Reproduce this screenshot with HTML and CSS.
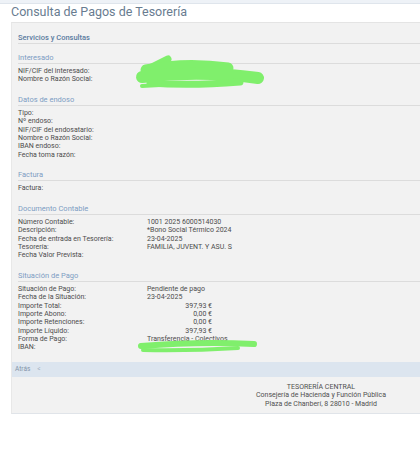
FILE: index.html
```html
<!DOCTYPE html>
<html lang="es">
<head>
    <meta charset="UTF-8">
    <meta name="viewport" content="width=device-width, initial-scale=1.0">
    <title>Consulta de Pagos de Tesorería</title>
    <link rel="stylesheet" href="styles.css">
</head>
<body>
    <div class="topbar"></div>
    <h1 class="title">Consulta de Pagos de Tesorería</h1>

    <div class="panel">
        <div class="panel-body">
            <h2 class="panel-head">Servicios y Consultas</h2>

            <div class="section">
                <h3>Interesado</h3>
                <div class="rows">
                    <span>NIF/CIF del interesado:</span><span></span>
                    <span>Nombre o Razón Social:</span><span></span>
                </div>
            </div>

            <div class="section">
                <h3>Datos de endoso</h3>
                <div class="rows">
                    <span>Tipo:</span><span></span>
                    <span>Nº endoso:</span><span></span>
                    <span>NIF/CIF del endosatario:</span><span></span>
                    <span>Nombre o Razón Social:</span><span></span>
                    <span>IBAN endoso:</span><span></span>
                    <span>Fecha toma razón:</span><span></span>
                </div>
            </div>

            <div class="section">
                <h3>Factura</h3>
                <div class="rows">
                    <span>Factura:</span><span></span>
                </div>
            </div>

            <div class="section">
                <h3>Documento Contable</h3>
                <div class="rows">
                    <span>Número Contable:</span><span>1001 2025 6000514030</span>
                    <span>Descripción:</span><span>*Bono Social Térmico 2024</span>
                    <span>Fecha de entrada en Tesorería:</span><span>23-04-2025</span>
                    <span>Tesorería:</span><span>FAMILIA, JUVENT. Y ASU. S</span>
                    <span>Fecha Valor Prevista:</span><span></span>
                </div>
            </div>

            <div class="section last">
                <h3>Situación de Pago</h3>
                <div class="rows">
                    <span>Situación de Pago:</span><span>Pendiente de pago</span>
                    <span>Fecha de la Situación:</span><span>23-04-2025</span>
                    <span>Importe Total:</span><span class="amount">397,93 €</span>
                    <span>Importe Abono:</span><span class="amount">0,00 €</span>
                    <span>Importe Retenciones:</span><span class="amount">0,00 €</span>
                    <span>Importe Líquido:</span><span class="amount">397,93 €</span>
                    <span>Forma de Pago:</span><span>Transferencia - Colectivos</span>
                    <span>IBAN:</span><span></span>
                </div>
            </div>
        </div>

        <div class="backbar">
            <a href="#">Atrás</a>
            <span class="arrow">&lt;</span>
        </div>

        <div class="footer">
            <p>TESORERÍA CENTRAL</p>
            <p>Consejería de Hacienda y Función Pública</p>
            <p>Plaza de Chanberí, 8 28010 - Madrid</p>
        </div>
    </div>

    <!-- redaction marks over the personal data -->
    <svg class="marks" width="420" height="474" viewBox="0 0 420 474">
        <g fill="none" stroke="#80ef6c" stroke-linecap="round" stroke-linejoin="round">
            <path d="M150 68 L168 59" stroke-width="7"/>
            <path d="M146 70 Q185 62 228 68" stroke-width="11"/>
            <path d="M142 77 Q200 70 258 78" stroke-width="12"/>
            <path d="M150 83 Q190 86 240 82" stroke-width="7"/>
            <path d="M142 86 L160 85" stroke-width="4"/>
            <path d="M141 346 Q200 341 254 344" stroke-width="6"/>
            <path d="M143 350 Q190 351 238 348" stroke-width="4"/>
        </g>
    </svg>
</body>
</html>
```

FILE: styles.css
```css
html, body {
    margin: 0;
    overflow: hidden;
}

body {
    position: relative;
    font-family: Roboto, "Liberation Sans", Arial, sans-serif;
    color: #4c4c4c;
    background-color: #fff;
}

.topbar {
    height: 3px;
    background-color: #eef2f7;
    border-bottom: 1px solid #dfe5ec;
}

.title {
    margin: 0 0 2px 11px;
    font-size: 12.5px;
    font-weight: normal;
    line-height: 16px;
    color: #687c90;
}

.panel {
    margin-left: 11px;
    width: 409px;
    background-color: #f2f2f2;
    border-top: 1px solid #e4e4e4;
    border-left: 1px solid #e8e8e8;
    border-bottom: 1px solid #e0e4e9;
}

.panel-body {
    padding: 10px 0 10px 6px;
}

.panel-head {
    margin: 0 0 9px;
    font-size: 7.5px;
    font-weight: 500;
    line-height: 10px;
    color: #5a7ba0;
    border-bottom: 1px solid #dcdcdc;
}

.section {
    margin-bottom: 11.5px;
}

.section.last {
    margin-bottom: 0;
}

.section h3 {
    margin: 0;
    font-size: 7.5px;
    font-weight: normal;
    line-height: 10px;
    color: #7d9dc3;
    border-bottom: 1px solid #dcdcdc;
}

.rows {
    display: grid;
    grid-template-columns: 129px 1fr;
    margin-top: 3px;
    font-size: 7px;
    line-height: 8.3px;
}

.amount {
    width: 65px;
    text-align: right;
}

.backbar {
    display: flex;
    gap: 7px;
    padding: 0 3px;
    height: 15px;
    align-items: center;
    background-color: #dce5ef;
    font-size: 6.5px;
    color: #8394a8;
}

.backbar a {
    color: #8394a8;
    text-decoration: none;
}

.backbar .arrow {
    color: #a5b3c3;
}

.footer {
    padding: 6px 0 5px 209px;
    text-align: center;
    font-size: 7px;
    line-height: 8.5px;
    color: #505050;
}

.footer p {
    margin: 0;
}

.marks {
    position: absolute;
    top: 0;
    left: 0;
    pointer-events: none;
}
```
